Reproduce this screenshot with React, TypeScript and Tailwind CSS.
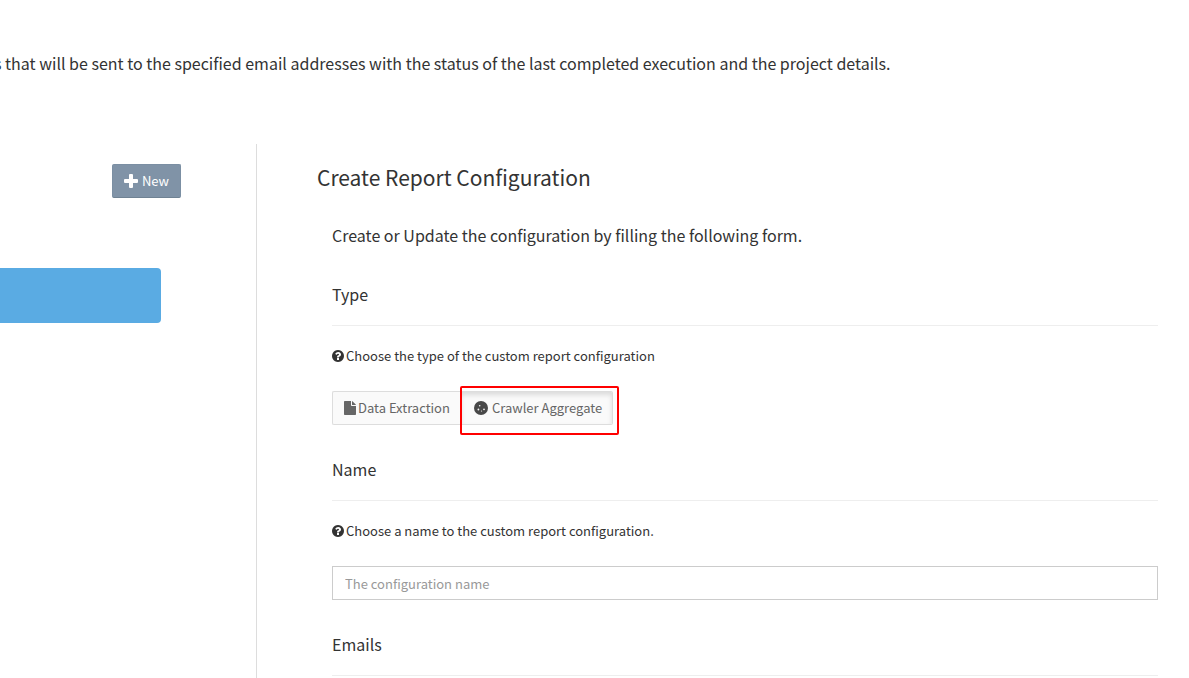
import type { ReactNode } from "react";

interface SectionProps {
  title: string;
  children?: ReactNode;
}

const PlusIcon = () => (
  <svg viewBox="0 0 14 14" className="h-[14px] w-[14px] shrink-0 fill-current" aria-hidden="true">
    <path d="M6 0h2q1 0 1 1v4h4q1 0 1 1v2q0 1-1 1H9v4q0 1-1 1H6q-1 0-1-1V9H1Q0 9 0 8V6q0-1 1-1h4V1q0-1 1-1z" />
  </svg>
);

const QuestionIcon = () => (
  <svg viewBox="0 0 1536 1536" className="h-3 w-3 shrink-0 fill-current" aria-hidden="true">
    <path d="M896 1248v-192q0-14-9-23t-23-9H672q-14 0-23 9t-9 23v192q0 14 9 23t23 9h192q14 0 23-9t9-23zm256-672q0-88-55.500-163T958 297t-170-41q-243 0-371 213-15 24 8 42l132 100q7 6 19 6 16 0 25-12 53-68 86-92 34-24 86-24 48 0 85.500 26t37.500 59q0 38-20 61t-68 45q-63 28-115.500 86.500T640 892v36q0 14 9 23t23 9h192q14 0 23-9t9-23q0-19 21.500-49.500T972 829q32-18 49-28.500t46-35 44.500-48 28-60.500 12.500-81zm384 192q0 209-103 385.500T1153.500 1433 768 1536t-385.500-103T103 1153.500 0 768t103-385.500T382.500 103 768 0t385.500 103T1433 382.500 1536 768z" />
  </svg>
);

const FileIcon = () => (
  <svg viewBox="0 0 12 14" className="h-[14px] w-3 shrink-0 fill-current" aria-hidden="true">
    <path d="M0 0.750Q0 0 0.750 0H7v4.250Q7 5 7.750 5H12v8.250Q12 14 11.250 14H0.750Q0 14 0 13.250ZM8 0.050Q8.400 0.150 8.700 0.450L11.500 3.250Q11.800 3.550 11.950 4H8Z" />
  </svg>
);

const CrawlerIcon = () => (
  <svg viewBox="0 0 14 14" className="h-[14px] w-[14px] shrink-0" aria-hidden="true">
    <circle cx="7" cy="7" r="7" fill="#484848" />
    <g fill="#f5f5f5">
      <circle cx="5.700" cy="4.700" r="0.8" />
      <circle cx="4.400" cy="8.500" r="0.9" />
      <circle cx="10" cy="8.300" r="0.9" />
      <circle cx="7.500" cy="10" r="0.6" />
    </g>
  </svg>
);

const SectionTitle = ({ children }: { children: ReactNode }) => (
  <h4 className="border-b border-[#eeeeee] pb-[21px] text-[16px] leading-5">{children}</h4>
);

const Section = ({ title, children }: SectionProps) => (
  <section className="pb-[34px]">
    <SectionTitle>{title}</SectionTitle>
    {children}
  </section>
);

const Hint = ({ children }: { children: ReactNode }) => (
  <p className="mt-5 mb-[25px] flex items-center gap-0.5 text-[13px] leading-5">
    <QuestionIcon />
    {children}
  </p>
);

export default function App() {
  return (
    <div className="flex min-h-screen flex-col overflow-x-hidden bg-white font-['Noto_Sans_CJK_JP','Noto_Sans_CJK_SC',sans-serif] text-[#333333]">
      <p className="-ml-1.5 pt-[51px] text-[16px] leading-6 whitespace-nowrap">
        s that will be sent to the specified email addresses with the status of the last completed execution and the
        project details.
      </p>

      <main className="mt-[69px] flex flex-1">
        <aside className="w-64 shrink-0 pt-5">
          <div className="flex justify-end pr-[75px]">
            <button
              type="button"
              className="flex h-[34px] items-center gap-1 rounded-xs border border-[#7b8fa3] border-b-[#6f8293] bg-[#8093a7] px-[11px] text-[13px] text-white"
            >
              <PlusIcon />
              New
            </button>
          </div>
          <div className="mt-[70px] mr-[95px] h-[55px] rounded-r-sm bg-[#5aabe3]" />
        </aside>

        <div className="min-w-0 flex-1 border-l border-[#dddddd] pt-5 pr-[31px] pl-[60px]">
          <h3 className="text-[21px] leading-[26px]">Create Report Configuration</h3>
          <form className="pl-[15px]">
            <p className="mt-[33px] mb-[37px] text-[16px] leading-6">
              Create or Update the configuration by filling the following form.
            </p>

            <Section title="Type">
              <Hint>Choose the type of the custom report configuration</Hint>
              <div className="flex text-[13px] text-[#666666]">
                <button
                  type="button"
                  className="flex h-[34px] items-center gap-0.5 rounded-l-xs border border-r-0 border-[#dddddd] bg-[#fafafa] px-[11px]"
                >
                  <FileIcon />
                  Data Extraction
                </button>
                <div className="relative">
                  <button
                    type="button"
                    aria-pressed="true"
                    className="flex h-[34px] items-center gap-1 rounded-r-xs border border-l-0 border-[#dddddd] bg-[#fafafa] pr-[10px] pl-[13px] shadow-[inset_0_3px_5px_rgba(0,0,0,0.125)]"
                  >
                    <CrawlerIcon />
                    Crawler Aggregate
                  </button>
                  <span className="pointer-events-none absolute -top-[5px] -right-[6px] -bottom-[10px] -left-px rounded-xs border-2 border-[#ff0000]" />
                </div>
              </div>
            </Section>

            <Section title="Name">
              <Hint>Choose a name to the custom report configuration.</Hint>
              <input
                type="text"
                aria-label="Name"
                placeholder="The configuration name"
                className="block h-[34px] w-full border border-[#cccccc] px-3 text-[13px] placeholder:text-[#999999]"
              />
            </Section>

            <SectionTitle>Emails</SectionTitle>
          </form>
        </div>
      </main>
    </div>
  );
}
